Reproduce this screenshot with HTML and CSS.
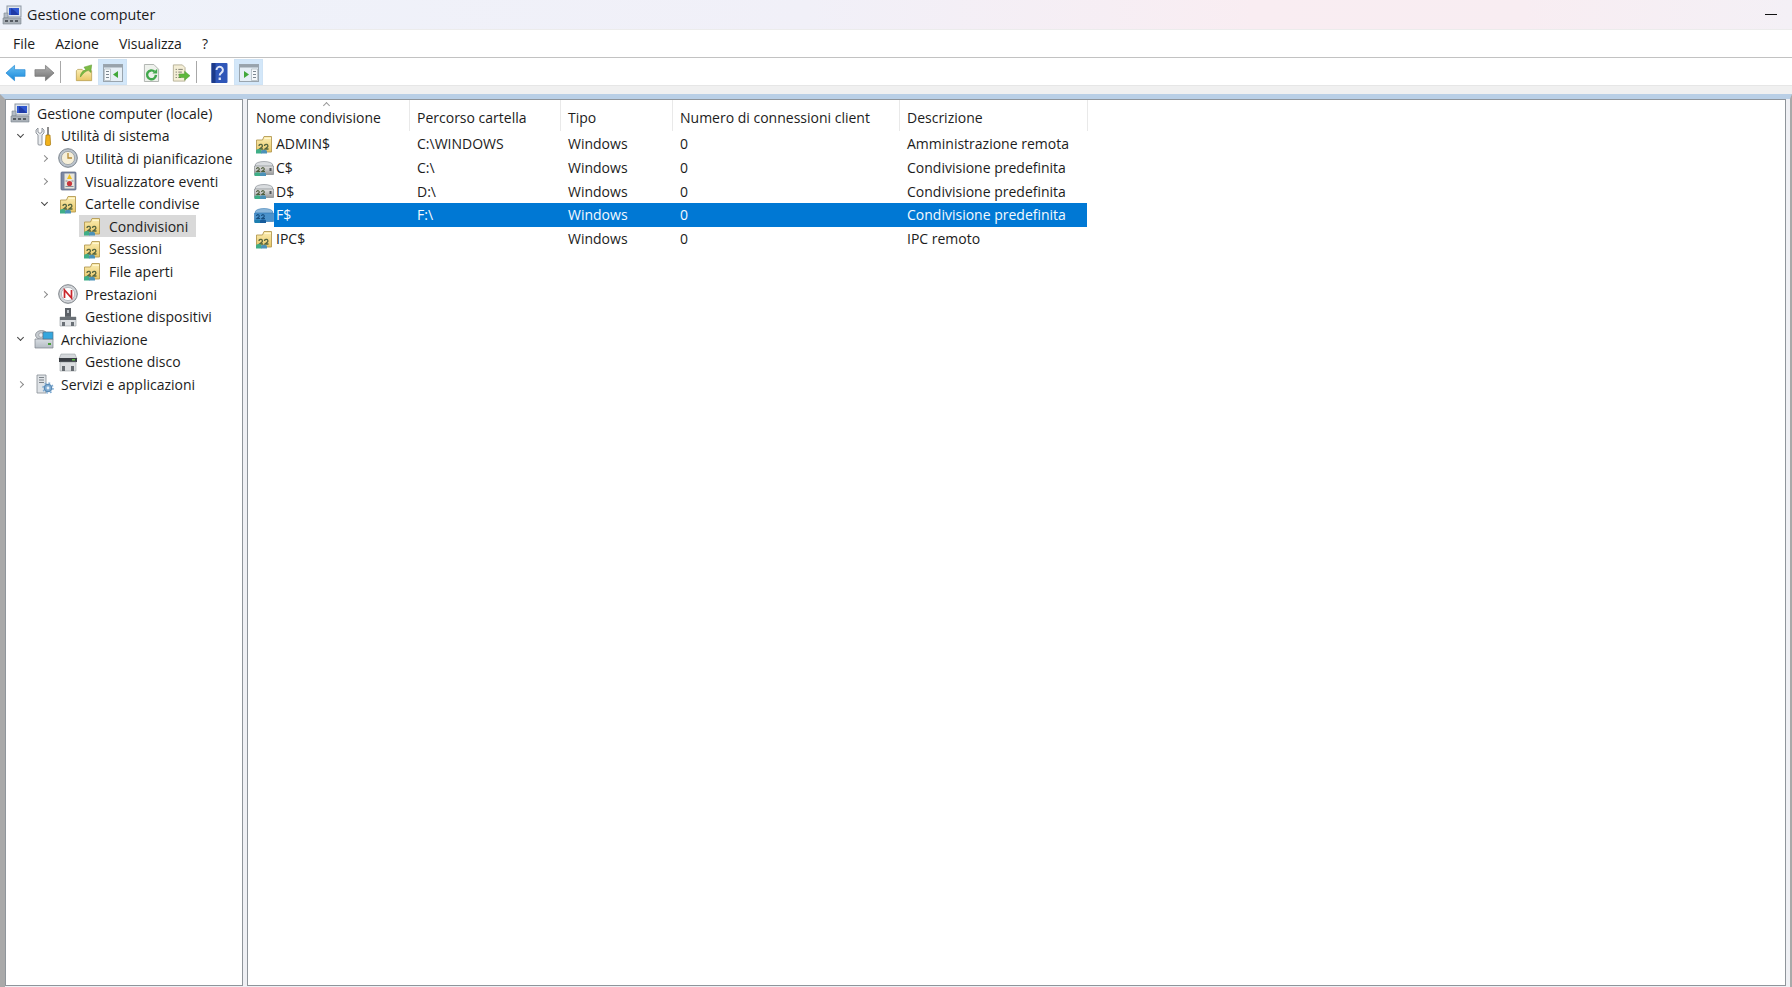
FILE: index.html
```html
<!DOCTYPE html>
<html lang="it">
<head>
<meta charset="utf-8">
<title>Gestione computer</title>
<link rel="stylesheet" href="styles.css">
</head>
<body>
<svg class="defs" width="0" height="0" aria-hidden="true">
  <defs>
    <linearGradient id="gf" x1="0" y1="0" x2="0" y2="1"><stop offset="0" stop-color="#fbeeb4"/><stop offset="1" stop-color="#e9c766"/></linearGradient>
    <linearGradient id="gb" x1="0" y1="0" x2="0" y2="1"><stop offset="0" stop-color="#6cc4f5"/><stop offset="1" stop-color="#1585d8"/></linearGradient>
    <linearGradient id="gg" x1="0" y1="0" x2="0" y2="1"><stop offset="0" stop-color="#b5b5b5"/><stop offset="1" stop-color="#6f6f6f"/></linearGradient>
    <linearGradient id="gd" x1="0" y1="0" x2="0" y2="1"><stop offset="0" stop-color="#e4e4e4"/><stop offset="1" stop-color="#9a9a9a"/></linearGradient>
    <linearGradient id="gs" x1="0" y1="0" x2="0" y2="1"><stop offset="0" stop-color="#d8dde2"/><stop offset="1" stop-color="#b4bcc4"/></linearGradient>
    <symbol id="i-comp" viewBox="0 0 20 20">
      <rect x="5" y="1" width="14" height="11" fill="#dfe6ee" stroke="#8d97a3"/>
      <path d="M7 3h10v7H7z" fill="#2f57cf"/>
      <path d="M9 3l4 3 4 4H9z" fill="#1f3aa6"/>
      <path d="M2 8h4v5H2z" fill="#b4bcc5" stroke="#7b848e" stroke-width=".6"/>
      <path d="M1 13h18v6H1z" fill="#aab1b8" stroke="#7b848e" stroke-width=".6"/>
      <path d="M3 15h3v2H3zM8 15h3v2H8zM13 15h3v2h-3z" fill="#555b62"/>
    </symbol>
    <symbol id="i-tools" viewBox="0 0 20 20">
      <path d="M4 2v4l2 1.500L8 6V2l2 2v3l-2 2v9a1 1 0 0 1-1 1H5a1 1 0 0 1-1-1V9L2 7V4z" fill="#e8ebee" stroke="#7b8289" stroke-width=".8"/>
      <rect x="13" y="1" width="2" height="8" fill="#8d8d8d"/>
      <path d="M12 9h4l.6 9a1.500 1.500 0 0 1-1.500 1.500h-2.200a1.500 1.500 0 0 1-1.500-1.500z" fill="#f2b21b" stroke="#a8790c" stroke-width=".7"/>
    </symbol>
    <symbol id="i-clock" viewBox="0 0 20 20">
      <circle cx="10" cy="10" r="9.300" fill="#bcc4cd" stroke="#7a838c"/>
      <circle cx="10" cy="10" r="6.600" fill="#f6efd8" stroke="#8b939b" stroke-width=".7"/>
      <path d="M10 5v5h4" fill="none" stroke="#b58b37" stroke-width="1.300"/>
    </symbol>
    <symbol id="i-event" viewBox="0 0 20 20">
      <rect x="3" y="1" width="15" height="18" rx="1" fill="#7c88a3" stroke="#56627f" stroke-width=".7"/>
      <rect x="6.500" y="2.500" width="10" height="15" fill="#e8e6dc"/>
      <path d="M11.500 3l2.500 5h-5z" fill="#f0c020"/>
      <circle cx="11.500" cy="12.500" r="2.600" fill="#c8363d"/>
      <path d="M7.500 15.500h8M7.500 10h2M13.500 10h2" stroke="#7d8290" stroke-width=".9"/>
    </symbol>
    <symbol id="i-share" viewBox="0 0 20 20">
      <path d="M2.500 6V18h15V2.500H10L8.500 6z" fill="url(#gf)" stroke="#b49a52" stroke-width=".9"/>
      <path d="M10.500 4.500h6.500" stroke="#fff6cf"/>
      <path d="M5 12a1.700 1.700 0 1 1 3 1.100L5.500 15H9M10.500 12a1.700 1.700 0 1 1 3 1.100L11 15h3.500" fill="none" stroke="#56653f" stroke-width="1.300"/>
      <path d="M2 19.500v-2.600a2.800 2 0 0 1 5.600 0v2.600z" fill="#3fae87"/>
      <path d="M7 19.500v-2a3 1.800 0 0 1 6 0v2z" fill="#4b91b8"/>
    </symbol>
    <symbol id="i-perf" viewBox="0 0 20 20">
      <circle cx="10" cy="10" r="9.300" fill="#d2d5d9" stroke="#7b8086"/>
      <circle cx="10" cy="10" r="6.600" fill="#fff" stroke="#a5aab0" stroke-width=".7"/>
      <path d="M6.500 14V6l7 8V6" fill="none" stroke="#c9272d" stroke-width="1.700"/>
    </symbol>
    <symbol id="i-dev" viewBox="0 0 20 20">
      <rect x="7" y="1" width="6" height="9" fill="#5b6066"/>
      <path d="M9 3h2v3H9z" fill="#b6bcc2"/>
      <path d="M2 10h16v9H2z" fill="#dfe2e5" stroke="#949aa0" stroke-width=".6"/>
      <path d="M2 10h16v3H2z" fill="#6a7076"/>
      <path d="M4 15h3v4H4zM13 15h3v4h-3z" fill="#6a7076"/>
    </symbol>
    <symbol id="i-store" viewBox="0 0 20 20">
      <ellipse cx="7.500" cy="6" rx="6" ry="4.500" fill="#c6cbd0" stroke="#7b8289" stroke-width=".7"/>
      <circle cx="7" cy="6" r="2.300" fill="#e9ecee" stroke="#868c92" stroke-width=".6"/>
      <path d="M1 10h18v9H1z" fill="url(#gs)" stroke="#7b8289" stroke-width=".7"/>
      <rect x="9" y="3" width="10" height="7" fill="#34a6dd" stroke="#53728a" stroke-width=".7"/>
      <rect x="14" y="14" width="3" height="2" fill="#4a9d3a"/>
    </symbol>
    <symbol id="i-disk" viewBox="0 0 20 20">
      <path d="M3 2h14l2 5H1z" fill="#d4d7da" stroke="#8b9096" stroke-width=".5"/>
      <path d="M1 6h18v4H1z" fill="#3a3e43"/>
      <rect x="14" y="7" width="3" height="1.500" fill="#59b944"/>
      <path d="M2 10h16v9H2z" fill="#dcdee0" stroke="#8b9096" stroke-width=".5"/>
      <path d="M4 14h3v5H4zM13 14h3v5h-3z" fill="#666b70"/>
    </symbol>
    <symbol id="i-svc" viewBox="0 0 20 20">
      <path d="M3 1h9v18H3z" fill="#dfe3e7" stroke="#868e96" stroke-width=".8"/>
      <path d="M5 3.500h5M5 6h5M5 8.500h5" stroke="#7c8389"/>
      <circle cx="14" cy="14" r="3.800" fill="#7fabd2" stroke="#4d80ad"/>
      <circle cx="14" cy="14" r="5" fill="none" stroke="#7fabd2" stroke-width="1.500" stroke-dasharray="1.800 2.100"/>
      <circle cx="14" cy="14" r="1.400" fill="#e9f1f8"/>
    </symbol>
    <symbol id="i-drive" viewBox="0 0 20 20">
      <ellipse cx="10" cy="7" rx="8.800" ry="3.500" fill="#d9dcdf" stroke="#7f858b" stroke-width=".6"/>
      <path d="M.5 8h19v8.500H.5z" fill="url(#gd)" stroke="#767c82" stroke-width=".6"/>
      <rect x="15.500" y="10" width="2" height="3" fill="#54585c"/>
      <path d="M2.500 11a1.400 1.400 0 1 1 2.600.8L3 13.500h3M7.500 11a1.400 1.400 0 1 1 2.600.8L8 13.500h3" fill="none" stroke="#4f5e3d" stroke-width="1.100"/>
      <path d="M.5 18v-2a3 1.700 0 0 1 6 0v2z" fill="#3fae87"/>
      <path d="M6 18v-2a3 1.700 0 0 1 6 0v2z" fill="#4b91b8"/>
    </symbol>
    <symbol id="i-drive-sel" viewBox="0 0 20 20">
      <ellipse cx="10" cy="7" rx="8.800" ry="3.500" fill="#8bb7db" stroke="#3d7eb5" stroke-width=".6"/>
      <path d="M.5 8h19v8.500H.5z" fill="#4c93cc" stroke="#2a74b2" stroke-width=".6"/>
      <path d="M2.500 11a1.400 1.400 0 1 1 2.600.8L3 13.500h3M7.500 11a1.400 1.400 0 1 1 2.600.8L8 13.500h3" fill="none" stroke="#174e7e" stroke-width="1.100"/>
      <path d="M.5 18v-2a3 1.700 0 0 1 6 0v2z" fill="#1d7fb0"/>
      <path d="M6 18v-2a3 1.700 0 0 1 6 0v2z" fill="#175c9c"/>
    </symbol>
    <symbol id="i-back" viewBox="0 0 22 18">
      <path d="M1 9l9-8v4.500h11v7H10V17z" fill="url(#gb)" stroke="#2f8fd6" stroke-width=".8"/>
    </symbol>
    <symbol id="i-fwd" viewBox="0 0 22 18">
      <path d="M21 9l-9-8v4.500H1v7h11V17z" fill="url(#gg)" stroke="#7a7a7a" stroke-width=".8"/>
    </symbol>
    <symbol id="i-up" viewBox="0 0 20 20">
      <path d="M1.500 7.500V18.500h17V7.500H9L8 6H3z" fill="url(#gf)" stroke="#b39a4e" stroke-width=".8"/>
      <path d="M6 14.500c0-4.500 2.500-7 6-8L10 3.500 18.500 1l-1 8.500L15 6.800c-3 1-6 3.500-9 7.700z" fill="#7dbb45" stroke="#5c9a30" stroke-width=".6"/>
    </symbol>
    <symbol id="i-pane" viewBox="0 0 20 18">
      <rect x=".5" y=".5" width="19" height="17" fill="#e6eff6" stroke="#9aa5ae"/>
      <path d="M1 1h18v2.500H1z" fill="#98a3ac"/>
      <path d="M1.500 5h6v11.500h-6z" fill="#f6f9fb" stroke="#a1abb3" stroke-width=".6"/>
      <path d="M3 7.500h3M3 10.500h3M3 13.500h3" stroke="#7d8891"/>
      <path d="M15 7v7l-5-3.500z" fill="#41a83a"/>
    </symbol>
    <symbol id="i-act" viewBox="0 0 20 18">
      <rect x=".5" y=".5" width="19" height="17" fill="#e6eff6" stroke="#9aa5ae"/>
      <path d="M1 1h18v2.500H1z" fill="#98a3ac"/>
      <path d="M12.500 5h6v11.500h-6z" fill="#f6f9fb" stroke="#a1abb3" stroke-width=".6"/>
      <path d="M14 7.500h3M14 10.500h3M14 13.500h3" stroke="#7d8891"/>
      <path d="M5 7v7l5-3.500z" fill="#41a83a"/>
    </symbol>
    <symbol id="i-refresh" viewBox="0 0 18 20">
      <path d="M1.500 1h10l5 5v13h-15z" fill="#eef1ec" stroke="#aeb3ae"/>
      <path d="M13.700 12a4.700 4.700 0 1 1-1.500-3.500" fill="none" stroke="#42a84d" stroke-width="2.600"/>
      <path d="M15 5.500v5h-5z" fill="#42a84d"/>
    </symbol>
    <symbol id="i-export" viewBox="0 0 20 20">
      <path d="M1.500 1h10l3 3v15h-13z" fill="#f4eed6" stroke="#b3ae93"/>
      <path d="M4 6h1.500M7 6h5M4 9h1.500M7 9h4M4 12h1.500M7 12h3M4 15h1.500M7 15h3" stroke="#77776a"/>
      <path d="M8 11h6V8l6 5-6 5v-3H8z" fill="#5fb83c" stroke="#45932a" stroke-width=".5"/>
    </symbol>
    <symbol id="i-help" viewBox="0 0 16 20">
      <rect width="16" height="20" rx="1" fill="#2f56b8"/>
      <rect width="4" height="20" fill="#1c3a8a"/>
      <path d="M5 7a3.200 3.200 0 1 1 5 2.600c-1.300.9-1.800 1.500-1.800 3" fill="none" stroke="#dfe6f8" stroke-width="2"/>
      <rect x="7.100" y="14.500" width="2.300" height="2.500" fill="#dfe6f8"/>
    </symbol>
  </defs>
</svg>

<header class="titlebar">
  <svg class="title-icon"><use href="#i-comp"/></svg>
  <span class="title-text">Gestione computer</span>
  <span class="minimize"></span>
</header>

<nav class="menubar">
  <span class="menu-item">File</span>
  <span class="menu-item">Azione</span>
  <span class="menu-item">Visualizza</span>
  <span class="menu-item">?</span>
</nav>

<div class="toolbar">
  <span class="tool"><svg class="ti-arrow"><use href="#i-back"/></svg></span>
  <span class="tool"><svg class="ti-arrow"><use href="#i-fwd"/></svg></span>
  <span class="tool-sep"></span>
  <span class="tool"><svg class="ti"><use href="#i-up"/></svg></span>
  <span class="tool on"><svg class="ti"><use href="#i-pane"/></svg></span>
  <span class="tool tool-gap"><svg class="ti-doc"><use href="#i-refresh"/></svg></span>
  <span class="tool"><svg class="ti"><use href="#i-export"/></svg></span>
  <span class="tool-sep"></span>
  <span class="tool"><svg class="ti-doc"><use href="#i-help"/></svg></span>
  <span class="tool on"><svg class="ti"><use href="#i-act"/></svg></span>
</div>

<main class="workspace">
  <div class="panes">
    <aside class="pane tree">
      <div class="node l0"><svg class="ic"><use href="#i-comp"/></svg><span>Gestione computer (locale)</span></div>
      <div class="node l1"><span class="caret open"></span><svg class="ic"><use href="#i-tools"/></svg><span>Utilità di sistema</span></div>
      <div class="node l2"><span class="caret"></span><svg class="ic"><use href="#i-clock"/></svg><span>Utilità di pianificazione</span></div>
      <div class="node l2"><span class="caret"></span><svg class="ic"><use href="#i-event"/></svg><span>Visualizzatore eventi</span></div>
      <div class="node l2"><span class="caret open"></span><svg class="ic"><use href="#i-share"/></svg><span>Cartelle condivise</span></div>
      <div class="node l3"><span class="caret none"></span><span class="sel-label"><svg class="ic"><use href="#i-share"/></svg><span>Condivisioni</span></span></div>
      <div class="node l3"><span class="caret none"></span><svg class="ic"><use href="#i-share"/></svg><span>Sessioni</span></div>
      <div class="node l3"><span class="caret none"></span><svg class="ic"><use href="#i-share"/></svg><span>File aperti</span></div>
      <div class="node l2"><span class="caret"></span><svg class="ic"><use href="#i-perf"/></svg><span>Prestazioni</span></div>
      <div class="node l2"><span class="caret none"></span><svg class="ic"><use href="#i-dev"/></svg><span>Gestione dispositivi</span></div>
      <div class="node l1"><span class="caret open"></span><svg class="ic"><use href="#i-store"/></svg><span>Archiviazione</span></div>
      <div class="node l2"><span class="caret none"></span><svg class="ic"><use href="#i-disk"/></svg><span>Gestione disco</span></div>
      <div class="node l1"><span class="caret"></span><svg class="ic"><use href="#i-svc"/></svg><span>Servizi e applicazioni</span></div>
    </aside>
    <section class="pane list">
      <div class="row head">
        <div class="hcell">Nome condivisione<span class="sort"></span></div>
        <div class="hcell">Percorso cartella</div>
        <div class="hcell">Tipo</div>
        <div class="hcell">Numero di connessioni client</div>
        <div class="hcell">Descrizione</div>
      </div>
      <div class="row item">
        <div class="namecell"><svg class="ic-row"><use href="#i-share"/></svg><span class="name">ADMIN$</span></div>
        <div class="cell">C:\WINDOWS</div><div class="cell">Windows</div><div class="cell">0</div><div class="cell">Amministrazione remota</div>
      </div>
      <div class="row item">
        <div class="namecell"><svg class="ic-row"><use href="#i-drive"/></svg><span class="name">C$</span></div>
        <div class="cell">C:\</div><div class="cell">Windows</div><div class="cell">0</div><div class="cell">Condivisione predefinita</div>
      </div>
      <div class="row item">
        <div class="namecell"><svg class="ic-row"><use href="#i-drive"/></svg><span class="name">D$</span></div>
        <div class="cell">D:\</div><div class="cell">Windows</div><div class="cell">0</div><div class="cell">Condivisione predefinita</div>
      </div>
      <div class="row item selected">
        <div class="namecell"><svg class="ic-row"><use href="#i-drive-sel"/></svg><span class="name">F$</span></div>
        <div class="cell">F:\</div><div class="cell">Windows</div><div class="cell">0</div><div class="cell">Condivisione predefinita</div>
      </div>
      <div class="row item">
        <div class="namecell"><svg class="ic-row"><use href="#i-share"/></svg><span class="name">IPC$</span></div>
        <div class="cell"></div><div class="cell">Windows</div><div class="cell">0</div><div class="cell">IPC remoto</div>
      </div>
    </section>
  </div>
</main>
</body>
</html>
```
FILE: styles.css
```css
* { box-sizing: border-box; }
html, body { height: 100%; }
body {
  margin: 0;
  display: flex;
  flex-direction: column;
  height: 987px;
  overflow: hidden;
  background: #fff;
  color: #1c1c1c;
  font-family: "Open Sans", "Noto Sans", sans-serif;
  font-size: 14px;
}
.defs { position: absolute; }

.titlebar {
  height: 29px;
  flex: none;
  display: flex;
  align-items: center;
  padding: 0 15px 0 2px;
  background: linear-gradient(90deg, #eef2fa 0%, #f1f0f8 45%, #f9edf2 70%, #f8edf2 85%, #f4f0f6 100%);
}
.title-icon { width: 20px; height: 20px; margin-right: 5px; }
.title-text { flex: 1; font-size: 14.3px; }
.minimize { width: 12px; height: 1px; background: #111; }

.menubar {
  height: 29px;
  flex: none;
  display: flex;
  align-items: center;
  gap: 20px;
  padding: 0 0 0 13px;
  background: #fff;
  border-top: 1px solid #ececec;
  border-bottom: 1px solid #c2c2c2;
}
.menu-item { font-size: 14px; }

.toolbar {
  height: 28px;
  flex: none;
  display: flex;
  align-items: stretch;
  padding: 1px 0 0 1px;
  background: #fff;
  border-bottom: 1px solid #e6e6e6;
}
.tool {
  width: 29px;
  display: flex;
  align-items: center;
  justify-content: center;
  padding-top: 2px;
}
.tool.on { background: #d3e7f9; border: 1px solid #cfe3f5; }
.tool-gap { margin-left: 10px; }
.tool-sep { width: 1px; margin: 2px 8px 2px 1px; background: #a8a8a8; }
.ti { width: 20px; height: 18px; }
.ti-arrow { width: 21px; height: 18px; }
.ti-doc { width: 17px; height: 20px; }

.workspace {
  flex: 1;
  min-height: 0;
  padding-top: 8px;
  background: #f0f0f0;
  display: flex;
}
.panes {
  flex: 1;
  display: flex;
  gap: 4px;
  background: #eff0f4;
  border-top: 5px solid #b9cfe6;
  border-left: 5px solid #a9a9a9;
  border-right: 2px solid #a9a9a9;
  padding-right: 4px;
  padding-bottom: 1px;
}
.pane {
  background: #fff;
  border: 1px solid #8f959b;
}
.tree {
  width: 238px;
  flex: none;
  padding-top: 2px;
}
.list {
  flex: 1;
  min-width: 0;
}

.node {
  height: 22.6px;
  display: flex;
  align-items: center;
  white-space: nowrap;
}
.l0 .ic { margin-left: 4px; }
.l1 { padding-left: 8px; }
.l2 { padding-left: 32px; }
.l3 { padding-left: 56px; }
.caret {
  width: 12px;
  height: 12px;
  flex: none;
  margin-right: 8px;
  position: relative;
}
.caret::before {
  content: "";
  position: absolute;
  left: 4px;
  top: 4px;
  width: 4px;
  height: 4px;
  border-right: 1px solid #8a8a8a;
  border-top: 1px solid #8a8a8a;
  transform: rotate(45deg);
}
.caret.open::before {
  left: 4px;
  top: 2px;
  border-color: #444;
  transform: rotate(135deg);
}
.caret.none::before { display: none; }
.ic { width: 20px; height: 20px; margin-right: 7px; flex: none; }
.sel-label {
  display: flex;
  align-items: center;
  height: 22px;
  margin-left: -3px;
  padding: 0 8px 0 3px;
  background: #d9d9d9;
}

.row {
  display: grid;
  grid-template-columns: 161px 151px 112px 227px 188px;
  width: 839px;
}
.head { height: 31px; align-items: stretch; margin-bottom: 1px; }
.hcell {
  position: relative;
  display: flex;
  align-items: center;
  padding: 3px 0 0 8px;
  box-shadow: 1px 0 0 #e9e9e9;
  white-space: nowrap;
}
.sort {
  position: absolute;
  left: 76px;
  top: 3px;
  width: 5px;
  height: 5px;
  border-left: 1px solid #9a9a9a;
  border-top: 1px solid #9a9a9a;
  transform: rotate(45deg);
}
.item { height: 23.7px; align-items: stretch; }
.namecell { display: flex; align-items: center; padding-left: 6px; min-width: 0; }
.ic-row { width: 20px; height: 20px; flex: none; }
.name, .cell {
  display: flex;
  align-items: center;
  white-space: nowrap;
}
.name { flex: 1; align-self: stretch; padding-left: 2px; }
.cell { padding-left: 8px; }
.selected .name, .selected .cell { background: #0078d4; color: #f4faff; }
```
